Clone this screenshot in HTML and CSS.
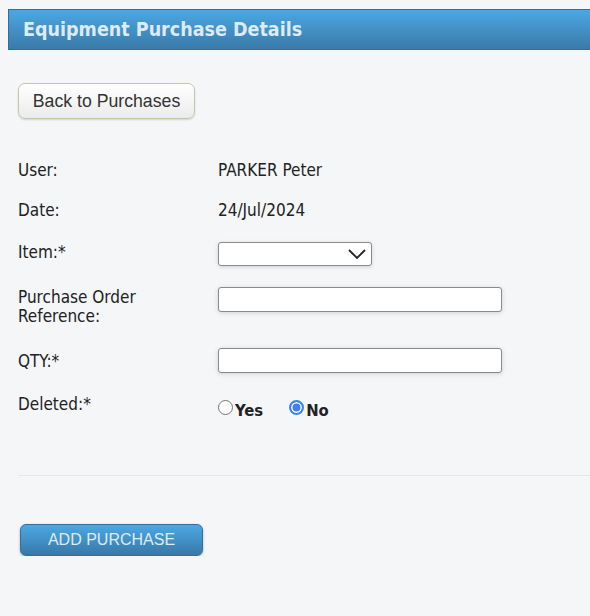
FILE: index.html
```html
<!DOCTYPE html>
<html>
<head>
<meta charset="utf-8">
<link rel="stylesheet" href="styles.css">
</head>
<body>
<div class="page">
  <div class="header">Equipment Purchase Details</div>
  <div class="content">
    <button class="back-btn">Back to Purchases</button>
    <div class="form">
      <div class="row row-user"><div class="label">User:</div><div class="value">PARKER Peter</div></div>
      <div class="row row-date"><div class="label">Date:</div><div class="value">24/Jul/2024</div></div>
      <div class="row row-item"><div class="label">Item:*</div><div class="value"><div class="select"><svg width="20" height="12" viewBox="0 0 20 12"><path d="M2 2 L10 10 L18 2" fill="none" stroke="#222" stroke-width="1.8"/></svg></div></div></div>
      <div class="row row-po"><div class="label">Purchase Order<br>Reference:</div><div class="value"><div class="input"></div></div></div>
      <div class="row row-qty"><div class="label">QTY:*</div><div class="value"><div class="input"></div></div></div>
      <div class="row row-del"><div class="label">Deleted:*</div><div class="value radios">
        <span class="radio-opt"><span class="radio"></span><b>Yes</b></span>
        <span class="radio-opt"><span class="radio checked"></span><b>No</b></span>
      </div></div>
    </div>
    <div class="sep"></div>
    <button class="add-btn">ADD PURCHASE</button>
  </div>
</div>
</body>
</html>
```
FILE: styles.css
```css
html, body { margin: 0; padding: 0; }
body {
  background: #f5f6f8;
  font-family: "DejaVu Sans Condensed", "DejaVu Sans", Verdana, sans-serif;
  font-stretch: condensed;
  color: #222;
}
.page { padding: 9px 0 0 8px; }
.header {
  height: 41px; box-sizing: border-box;
  background: linear-gradient(#4ba8e3, #3a7aa9);
  border: 1px solid #2f6f9d; border-right: none;
  color: #dcebf7; font-size: 19.5px; font-weight: bold;
  padding: 0 0 0 14px; line-height: 39px;
}
.content { padding: 0 0 0 10px; }
.back-btn {
  display: block;
  margin-top: 33px; width: 177px; height: 36px;
  border: 1px solid #c7c7a8; border-radius: 7px;
  background: linear-gradient(#ffffff, #ebebeb);
  box-shadow: 0 1px 2px rgba(0,0,0,0.15);
  font-family: "Liberation Sans", Arial, sans-serif; font-size: 17.7px; color: #333;
  padding: 0;
}
.form { margin-top: 41px; font-size: 17px; }
.row { display: flex; align-items: flex-start; }
.label { width: 200px; line-height: 20px; flex: none; }
.value { line-height: 20px; }
.row-date { margin-top: 20px; }
.row-item { margin-top: 22px; }
.select {
  width: 148px; height: 22px; background: #fff;
  border: 1px solid #8a8a8a; border-radius: 3px;
  display: flex; justify-content: flex-end; align-items: center; padding-right: 4px;
  box-shadow: 0 1px 4px rgba(0,0,0,0.15);
}
.row-po { margin-top: 22px; }
.row-po .label { line-height: 19px; }
.row-po .input { margin-top: -1px; }
.input {
  width: 282px; height: 23px; background: #fff;
  border: 1px solid #8a8a8a; border-radius: 3px;
  box-shadow: 0 1px 5px rgba(0,0,0,0.15);
}
.row-qty { margin-top: 22px; }
.row-qty .label { margin-top: 3px; }
.row-del { margin-top: 21px; }
.radios { display: flex; gap: 26px; }
.radio-opt { display: flex; align-items: flex-start; gap: 2px; }
.radio-opt b { margin-top: 7px; line-height: 20px; font-size: 16.5px; }
.radio {
  margin-top: 6px;
  width: 15px; height: 15px; border-radius: 50%; border: 1px solid #767676; background: #fff;
  box-sizing: border-box; display: inline-block; flex: none;
}
.radio.checked { border: 2px solid #3b82f6; background: #3b82f6; box-shadow: inset 0 0 0 1.5px #fff; }
.sep { margin-top: 54px; height: 1px; background: #e6e7e9; }
.add-btn {
  display: block;
  margin-top: 48px; margin-left: 2px; width: 183px; height: 32px;
  border: 1px solid #2f6f9d; border-radius: 6px;
  background: linear-gradient(#4ca8e4, #3878a8);
  box-shadow: 0 1px 3px rgba(0,0,0,0.25);
  color: #dfeaf4; font-family: "Liberation Sans", Arial, sans-serif; font-size: 16px; padding: 0;
}
```
